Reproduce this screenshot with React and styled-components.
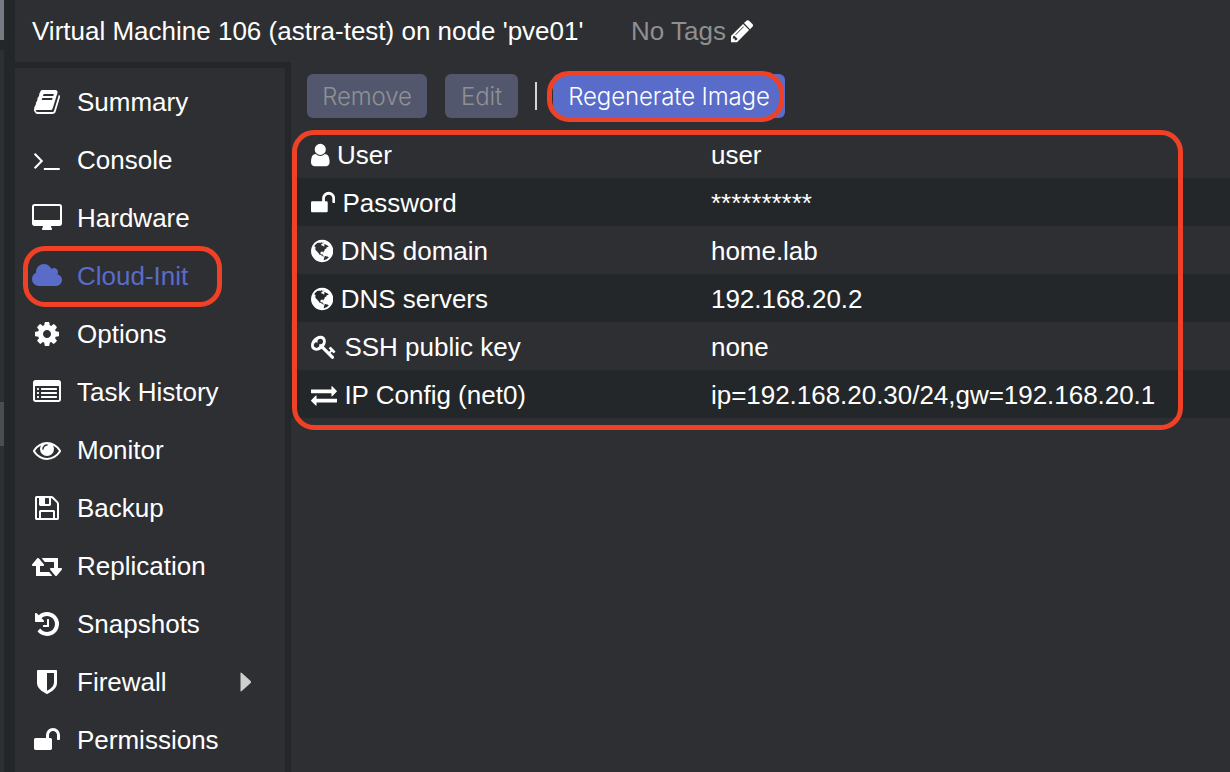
import React from 'react';
import styled, { createGlobalStyle } from 'styled-components';

const colors = {
  panel: '#2e2f33',
  dark: '#23272a',
  accent: '#596cc9',
  disabled: '#52576e',
  ring: '#ee4126',
};

const GlobalStyle = createGlobalStyle`
  * { box-sizing: border-box; }
  body {
    margin: 0;
    background: ${colors.dark};
    color: #fff;
    font-family: 'Liberation Sans', Arial, sans-serif;
    font-size: 26px;
    overflow: hidden;
  }
`;

/* Glyph outlines on a 1792-unit em: x is the left edge, w the advance width */
const glyphs = {
  book: { x: 64, w: 1664, d: 'M1703 478q40 57 18 129l-275 906q-19 64-76.5 107.500t-122.500 43.500h-923q-77 0-148.500-53.500t-99.500-131.500q-24-67-2-127 0-4 3-27t4-37q1-8-3-21.500t-3-19.500q2-11 8-21t16.500-23.500 16.500-23.500q23-38 45-91.500t30-91.500q3-10 .5-30t-.5-28q3-11 17-28t17-23q21-36 42-92t25-90q1-9-2.500-32t.5-28q4-13 22-30.500t22-22.500q19-26 42.500-84.500t27.500-96.500q1-8-3-25.500t-2-26.500q2-8 9-18t18-23 17-21q8-12 16.500-30.500t15-35 16-36 19.500-32 26.500-23.500 36-11.500 47.500 5.500l-1 3q38-9 51-9h761q74 0 114 56t18 130l-274 906q-36 119-71.500 153.500t-128.500 34.500h-869q-27 0-38 15-11 16-1 43 24 70 144 70h923q29 0 56-15.500t35-41.500l300-987q7-22 5-57 38 15 59 43zm-1064 2q-4 13 2 22.500t20 9.500h608q13 0 25.500-9.500t16.500-22.500l21-64q4-13-2-22.500t-20-9.500h-608q-13 0-25.500 9.500t-16.500 22.500zm-83 256q-4 13 2 22.500t20 9.500h608q13 0 25.500-9.500t16.500-22.500l21-64q4-13-2-22.500t-20-9.500h-608q-13 0-25.500 9.500t-16.500 22.500z' },
  terminal: { x: 77, w: 1651, d: 'M649 983l-466 466q-10 10-23 10t-23-10l-50-50q-10-10-10-23t10-23l393-393-393-393q-10-10-10-23t10-23l50-50q10-10 23-10t23 10l466 466q10 10 10 23t-10 23zm1079 457v64q0 14-9 23t-23 9h-960q-14 0-23-9t-9-23v-64q0-14 9-23t23-9h960q14 0 23 9t9 23z' },
  desktop: { x: 64, w: 1920, d: 'M1856 992v-832q0-13-9.500-22.500t-22.500-9.500h-1600q-13 0-22.500 9.500t-9.500 22.500v832q0 13 9.500 22.500t22.500 9.500h1600q13 0 22.500-9.500t9.500-22.500zm128-832v1088q0 66-47 113t-113 47h-544q0 37 16 77.500t32 71 16 43.500q0 26-19 45t-45 19h-512q-26 0-45-19t-19-45q0-14 16-44t32-70 16-78h-544q-66 0-113-47t-47-113v-1088q0-66 47-113t113-47h1600q66 0 113 47t47 113z' },
  cloud: { x: 64, w: 1920, d: 'M1984 1152q0 159-112.500 271.500t-271.500 112.500h-1088q-185 0-316.500-131.500t-131.500-316.500q0-132 71-241.500t187-163.500q-2-28-2-43 0-212 150-362t362-150q158 0 286.500 88t187.500 230q70-62 166-62 106 0 181 75t75 181q0 75-41 138 129 30 213 134.500t84 239.500z' },
  cog: { x: 128, w: 1536, d: 'M1152 896q0-106-75-181t-181-75-181 75-75 181 75 181 181 75 181-75 75-181zm512-109v222q0 12-8 23t-20 13l-185 28q-19 54-39 91 35 50 107 138 10 12 10 25t-9 23q-27 37-99 108t-94 71q-12 0-26-9l-138-108q-44 23-91 38-16 136-29 186-7 28-36 28h-222q-14 0-24.500-8.500t-11.500-21.500l-28-184q-49-16-90-37l-141 107q-10 9-25 9-14 0-25-11-126-114-165-168-7-10-7-23 0-12 8-23 15-21 51-66.500t54-70.500q-27-50-41-99l-183-27q-13-2-21-12.500t-8-23.500v-222q0-12 8-23t19-13l186-28q14-46 39-92-40-57-107-138-10-12-10-24 0-10 9-23 26-36 98.500-107.500t94.500-71.500q13 0 26 10l138 107q44-23 91-38 16-136 29-186 7-28 36-28h222q14 0 24.500 8.500t11.500 21.500l28 184q49 16 90 37l142-107q9-9 24-9 13 0 25 10 129 119 165 170 7 8 7 22 0 12-8 23-15 21-51 66.500t-54 70.500q26 50 41 98l183 28q13 2 21 12.500t8 23.500z' },
  listAlt: { x: 0, w: 1792, d: 'M384 1184v64q0 13-9.500 22.500t-22.500 9.500h-64q-13 0-22.500-9.500t-9.500-22.500v-64q0-13 9.500-22.500t22.500-9.500h64q13 0 22.500 9.500t9.500 22.500zm0-256v64q0 13-9.500 22.500t-22.500 9.500h-64q-13 0-22.500-9.500t-9.500-22.500v-64q0-13 9.500-22.500t22.500-9.500h64q13 0 22.500 9.500t9.500 22.500zm0-256v64q0 13-9.500 22.500t-22.500 9.500h-64q-13 0-22.500-9.500t-9.500-22.500v-64q0-13 9.500-22.500t22.500-9.500h64q13 0 22.500 9.500t9.500 22.500zm1152 512v64q0 13-9.500 22.500t-22.500 9.500h-960q-13 0-22.500-9.500t-9.500-22.500v-64q0-13 9.500-22.500t22.500-9.500h960q13 0 22.500 9.500t9.500 22.500zm0-256v64q0 13-9.500 22.500t-22.500 9.500h-960q-13 0-22.500-9.500t-9.500-22.500v-64q0-13 9.500-22.500t22.500-9.500h960q13 0 22.500 9.500t9.500 22.500zm0-256v64q0 13-9.500 22.500t-22.500 9.500h-960q-13 0-22.500-9.500t-9.500-22.500v-64q0-13 9.500-22.500t22.500-9.500h960q13 0 22.500 9.500t9.500 22.500zm128 704v-832q0-13-9.500-22.500t-22.500-9.500h-1472q-13 0-22.500 9.500t-9.500 22.500v832q0 13 9.500 22.500t22.500 9.500h1472q13 0 22.500-9.500t9.500-22.500zm128-1088v1088q0 66-47 113t-113 47h-1472q-66 0-113-47t-47-113v-1088q0-66 47-113t113-47h1472q66 0 113 47t47 113z' },
  eye: { x: 0, w: 1792, d: 'M1664 960q-152-236-381-353 61 104 61 225 0 185-131.500 316.500t-316.500 131.500-316.500-131.500-131.500-316.500q0-121 61-225-229 117-381 353 133 205 333.500 326.500t434.500 121.500 434.500-121.500 333.500-326.500zm-720-384q0-20-14-34t-34-14q-125 0-214.500 89.500t-89.500 214.500q0 20 14 34t34 14 34-14 14-34q0-86 61-147t147-61q20 0 34-14t14-34zm848 384q0 34-20 69-140 230-376.500 368.500t-499.500 138.500-499.500-139-376.500-368q-20-35-20-69t20-69q140-229 376.500-368t499.500-139 499.500 139 376.500 368q20 35 20 69z' },
  floppy: { x: 128, w: 1536, d: 'M512 1536h768v-384h-768v384zm896 0h128v-896q0-14-10-38.500t-20-34.500l-281-281q-10-10-34-20t-39-10v416q0 40-28 68t-68 28h-576q-40 0-68-28t-28-68v-416h-128v1280h128v-416q0-40 28-68t68-28h832q40 0 68 28t28 68v416zm-384-928v-320q0-13-9.500-22.500t-22.500-9.500h-192q-13 0-22.500 9.500t-9.500 22.500v320q0 13 9.500 22.500t22.500 9.500h192q13 0 22.500-9.500t9.500-22.500zm640 32v928q0 40-28 68t-68 28h-1344q-40 0-68-28t-28-68v-1344q0-40 28-68t68-28h928q40 0 88 20t76 48l280 280q28 28 48 76t20 88z' },
  retweet: { x: 0, w: 1920, flip: true, d: 'M1280 32q0-13-9.500-22.500t-22.500-9.500h-960q-8 0-13.500 2t-9 7t-5.500 8t-3 11.500t-1 11.500v13v11v160v416h-192q-26 0-45 19t-19 45q0 24 15 41l320 384q19 22 49 22t49-22l320-384q15-17 15-41q0-26-19-45t-45-19h-192v-384h576q16 0 25-11l160-192q7-10 7-21zM1920 448q0-24-15-41l-320-384q-20-23-49-23t-49 23l-320 384q-15 17-15 41q0 26 19 45t45 19h192v384h-576q-16 0-25 12l-160 192q-7 9-7 20q0 13 9.500 22.500t22.500 9.500h960q8 0 13.500-2t9-7t5.500-8t3-11.500t1-11.500v-13v-11v-160v-416h192q26 0 45-19t19-45z' },
  history: { x: 128, w: 1536, d: 'M1664 896q0 156-61 298t-164 245-245 164-298 61q-172 0-327-72.500t-264-204.500q-7-10-6.500-22.500t8.500-20.500l137-138q10-9 25-9 16 2 23 12 73 95 179 147t225 52q104 0 198.500-40.500t163.500-109.500 109.500-163.500 40.500-198.500-40.500-198.500-109.500-163.500-163.500-109.500-198.500-40.500q-98 0-188 35.500t-160 101.500l137 138q31 30 14 69-17 40-59 40h-448q-26 0-45-19t-19-45v-448q0-42 40-59 39-17 69 14l130 129q107-101 244.500-156.500t284.500-55.500q156 0 298 61t245 164 164 245 61 298zm-640-288v448q0 14-9 23t-23 9h-320q-14 0-23-9t-9-23v-64q0-14 9-23t23-9h224v-352q0-14 9-23t23-9h64q14 0 23 9t9 23z' },
  shield: { x: 256, w: 1280, d: 'M1344 960v-640h-448v1137q119-63 213-137 235-184 235-360zm192-768v768q0 86-33.500 170.500t-83 150-118 127.500-126.500 103-121 77.500-89.500 49.500-42.500 20q-12 6-26 6t-26-6q-16-7-42.500-20t-89.500-49.500-121-77.500-126.500-103-118-127.500-83-150-33.500-170.500v-768q0-26 19-45t45-19h1152q26 0 45 19t19 45z' },
  unlock: { x: 64, w: 1664, d: 'M1728 576v256q0 26-19 45t-45 19h-64q-26 0-45-19t-19-45v-256q0-106-75-181t-181-75-181 75-75 181v192h96q40 0 68 28t28 68v576q0 40-28 68t-68 28h-960q-40 0-68-28t-28-68v-576q0-40 28-68t68-28h672v-192q0-185 131.500-316.500t316.500-131.500 316.500 131.500 131.500 316.500z' },
  user: { x: 256, w: 1280, d: 'M1536 1399q0 109-62.500 187t-150.500 78h-854q-88 0-150.500-78t-62.500-187q0-85 8.500-160.500t31.500-152 58.500-131 94-89 134.500-34.500q131 128 313 128t313-128q76 0 134.500 34.500t94 89 58.500 131 31.500 152 8.500 160.500zm-256-887q0 159-112.500 271.500t-271.500 112.500-271.500-112.500-112.500-271.500 112.500-271.500 271.500-112.500 271.500 112.500 112.500 271.500z' },
  globe: { x: 128, w: 1536, d: 'M896 128q209 0 385.500 103t279.500 279.500 103 385.500-103 385.500-279.500 279.500-385.500 103-385.500-103-279.500-279.500-103-385.500 103-385.500 279.500-279.500 385.500-103zm274 521q-2 1-9.500 9.500t-13.500 9.500q2 0 4.500-5t5-11 3.500-7q6-7 22-15 14-6 52-12 34-8 51 11-2-2 9.500-13t14.500-12q3-2 15-4.500t15-7.500l2-22q-12 1-17.500-7t-6.500-21q0 2-6 8 0-7-4.500-8t-11.500 1-9 1q-10-3-15-7.500t-8-16.500-4-15q-2-5-9.500-11t-9.500-10q-1-2-2.500-5.500t-3-6.500-4-5.500-5.500-2.500-7 5-7.500 10-4.500 5q-3-2-6-1.500t-4.500 1-4.500 3-5 3.500q-3 2-8.500 3t-8.500 2q15-5-1-11-10-4-16-3 9-4 7.500-12t-8.500-14h5q-1-4-8.500-8.500t-17.500-8.500-13-6q-8-5-34-9.500t-33-.5q-5 6-4.500 10.500t4 14 3.500 12.500q1 6-5.500 13t-6.500 12q0 7 14 15.500t10 21.500q-3 8-16 16t-16 12q-5 8-1.500 18.500t10.500 16.500q2 2 1.500 4t-3.500 4.500-5.500 4-6.500 3.500l-3 2q-11 5-20.500-6t-13.500-26q-7-25-16-30-23-8-29 1-5-13-41-26-25-9-58-4 6-1 0-15-7-15-19-12 3-6 4-17.500t1-13.500q3-13 12-23 1-1 7-8.500t9.500-13.500.5-6q35 4 50-11 5-5 11.500-17t10.500-17q9-6 14-5.500t14.500 5.500 14.500 5q14 1 15.500-11t-7.500-20q12 1 3-17-5-7-8-9-12-4-27 5-8 4 2 8-1-1-9.500 10.500t-16.500 17.500-16-5q-1-1-5.500-13.500t-9.500-13.500q-8 0-16 15 3-8-11-15t-24-8q19-12-8-27-7-4-20.500-5t-19.500 4q-5 7-5.500 11.500t5 8 10.500 5.500 11.500 4 8.500 3q14 10 8 14-2 1-8.500 3.500t-11.500 4.500-6 4q-3 4 0 14t-2 14q-5-5-9-17.500t-7-16.500q7 9-25 6l-10-1q-4 0-16 2t-20.500 1-13.500-8q-4-8 0-20 1-4 4-2-4-3-11-9.500t-10-8.500q-46 15-94 41 6 1 12-1 5-2 13-6.500t10-5.500q34-14 42-7l5-5q14 16 20 25-7-4-30-1-20 6-22 12 7 12 5 18-4-3-11.500-10t-14.500-11-15-5q-16 0-22 1-146 80-235 222 7 7 12 8 4 1 5 9t2.500 11 11.500-3q9 8 3 19 1-1 44 27 19 17 21 21 3 11-10 18-1-2-9-9t-9-4q-3 5 .5 18.500t10.500 12.500q-7 0-9.500 16t-2.500 35.500-1 23.500l2 1q-3 12 5.500 34.500t21.500 19.500q-13 3 20 43 6 8 8 9 3 2 12 7.500t15 10 10 10.500q4 5 10 22.500t14 23.500q-2 6 9.500 20t10.500 23q-1 0-2.500 1t-2.500 1q3 7 15.500 14t15.500 13q1 3 2 10t3 11 8 2q2-20-24-62-15-25-17-29-3-5-5.500-15.500t-4.500-14.500q2 0 6 1.500t8.500 3.500 7.500 4 2 3q-3 7 2 17.500t12 18.500 17 19 12 13q6 6 14 19.500t0 13.500q9 0 20 10.500t17 19.500q5 8 8 26t5 24q2 7 8.500 13.500t12.500 9.500l16 8 13 7q5 2 18.500 10.500t21.500 11.500q10 4 16 4t14.500-2.500 13.500-3.500q15-2 29 15t21 21q36 19 55 11-2 1 .5 7.500t8 15.500 9 14.500 5.500 8.500q5 6 18 15t18 15q6-4 7-9-3 8 7 20t18 10q14-3 14-32-31 15-49-18 0-1-2.500-5.500t-4-8.500-2.500-8.500 0-7.500 5-3q9 0 10-3.500t-2-12.500-4-13q-1-8-11-20t-12-15q-5 9-16 8t-16-9q0 1-1.500 5.500t-1.500 6.500q-13 0-15-1 1-3 2.500-17.500t3.500-22.500q1-4 5.500-12t7.500-14.500 4-12.500-4.500-9.500-17.500-2.500q-19 1-26 20-1 3-3 10.500t-5 11.500-9 7q-7 3-24 2t-24-5q-13-8-22.500-29t-9.500-37q0-10 2.500-26.500t3-25-5.500-24.500q3-2 9-9.500t10-10.500q2-1 4.500-1.500t4.500 0 4-1.500 3-6q-1-1-4-3-3-3-4-3 7 3 28.500-1.500t27.500 1.500q15 11 22-2 0-1-2.500-9.500t-.5-13.500q5 27 29 9 3 3 15.500 5t17.500 5q3 2 7 5.500t5.500 4.500 5-.5 8.500-6.500q10 14 12 24 11 40 19 44 7 3 11 2t4.500-9.500 0-14-1.500-12.500l-1-8v-18l-1-8q-15-3-18.500-12t1.500-18.500 15-18.500q1-1 8-3.500t15.500-6.500 12.500-8q21-19 15-35 7 0 11-9-1 0-5-3t-7.500-5-4.500-2q9-5 2-16 5-3 7.500-11t7.500-10q9 12 21 2 7-8 1-16 5-7 20.500-10.500t18.500-9.500q7 2 8-2t1-12 3-12q4-5 15-9t13-5l17-11q3-4 0-4 18 2 31-11 10-11-6-20 3-6-3-9.500t-15-5.500q3-1 11.500-.5t10.500-1.500q15-10-7-16-17-5-43 12zm-163 877q206-36 351-189-3-3-12.500-4.500t-12.500-3.500q-18-7-24-8 1-7-2.500-13t-8-9-12.500-8-11-7q-2-2-7-6t-7-5.500-7.500-4.500-8.500-2-10 1l-3 1q-3 1-5.500 2.500t-5.500 3-4 3 0 2.500q-21-17-36-22-5-1-11-5.500t-10.500-7-10-1.500-11.500 7q-5 5-6 15t-2 13q-7-5 0-17.500t2-18.500q-3-6-10.500-4.500t-12 4.500-11.500 8.500-9 6.500-8.500 5.500-8.500 7.500q-3 4-6 12t-5 11q-2-4-11.500-6.500t-9.500-5.500q2 10 4 35t5 38q7 31-12 48-27 25-29 40-4 22 12 26 0 7-8 20.500t-7 21.500q0 6 2 16z' },
  key: { x: 0, w: 1792, d: 'M832 512q0-80-56-136t-136-56-136 56-56 136q0 42 19 83-41-19-83-19-80 0-136 56t-56 136 56 136 136 56 136-56 56-136q0-42-19-83 41 19 83 19 80 0 136-56t56-136zm851 704q0 17-49 66t-66 49q-9 0-28.500-16t-36.500-33-38.500-40-24.500-26l-96 96 220 220q28 28 28 68 0 42-39 81t-81 39q-40 0-68-28l-671-671q-176 131-365 131-163 0-265.500-102.500t-102.500-265.500q0-160 95-313t248-248 313-95q163 0 265.500 102.500t102.500 265.500q0 189-131 365l355 355 96-96q-3-3-26-24.500t-40-38.500-33-36.500-16-28.500q0-17 49-66t66-49q13 0 23 10 6 6 46 44.500t82 79.500 86.500 86 73 78 28.500 41z' },
  exchange: { x: 0, w: 1792, d: 'M1792 1184v192q0 13-9.500 22.500t-22.500 9.500h-1376v192q0 13-9.500 22.500t-22.500 9.500q-12 0-24-10l-319-320q-9-9-9-22 0-14 9-23l320-320q9-9 23-9 13 0 22.500 9.500t9.500 22.500v192h1376q13 0 22.500 9.500t9.500 22.500zm0-544q0 14-9 23l-320 320q-9 9-23 9-13 0-22.500-9.500t-9.500-22.500v-192h-1376q-13 0-22.500-9.500t-9.500-22.500v-192q0-13 9.500-22.500t22.500-9.500h1376v-192q0-14 9-23t23-9q12 0 24 10l319 319q9 9 9 23z' },
  pencil: { x: 128, w: 1536, d: 'M491 1536l91-91-235-235-91 91v107h128v128h107zm523-928q0-22-22-22-10 0-17 7l-542 542q-7 7-7 17 0 22 22 22 10 0 17-7l542-542q7-7 7-17zm-54-192l416 416-832 832h-416v-416zm683 96q0 53-37 90l-166 166-416-416 166-165q36-38 90-38 53 0 91 38l235 234q37 39 37 91z' },
};

const Svg = styled.svg`
  display: block;
  flex: none;
  fill: currentColor;
`;

function Glyph({ name, size }) {
  const g = glyphs[name];
  return (
    <Svg width={(g.w / 1792) * size} height={size} viewBox={`${g.x} 0 ${g.w} 1792`}>
      <path d={g.d} transform={g.flip ? 'translate(0 1536) scale(1 -1)' : undefined} />
    </Svg>
  );
}

const Screen = styled.div`
  position: relative;
  display: flex;
  width: 1230px;
  height: 772px;
  background: ${colors.dark};
`;

const TreeEdge = styled.div`
  display: flex;
  flex-direction: column;
  flex: none;
  width: 4px;
  margin-right: 11px;
`;

const TreeEdgePart = styled.div`
  height: ${(p) => p.$height}px;
  background: ${(p) => p.$color};
`;

const Main = styled.div`
  display: flex;
  flex-direction: column;
  flex: 1;
  min-width: 0;
`;

const TitleBar = styled.header`
  display: flex;
  align-items: center;
  flex: none;
  height: 62px;
  padding-left: 17px;
  background: ${colors.panel};
  white-space: nowrap;
`;

const Title = styled.h1`
  width: 599px;
  margin: 0;
  font-size: 26px;
  font-weight: 400;
`;

const Tags = styled.div`
  display: flex;
  align-items: center;
  gap: 5px;
  color: #8e8f91;
  svg { color: #fff; }
`;

const Body = styled.div`
  display: flex;
  flex: 1;
  min-height: 0;
`;

const Sidebar = styled.nav`
  flex: none;
  width: 276px;
  padding-top: 5px;
  border-top: 6px solid ${colors.dark};
  border-right: 6px solid ${colors.dark};
  background: ${colors.panel};
`;

const MenuItem = styled.div`
  display: flex;
  align-items: center;
  height: 58px;
  padding-left: 14px;
  color: ${(p) => (p.$active ? colors.accent : '#fff')};
`;

const MenuIcon = styled.span`
  display: flex;
  justify-content: center;
  width: 36px;
  margin-right: 12px;
`;

const MenuLabel = styled.span`
  flex: 1;
`;

const Expander = styled.svg`
  display: block;
  margin-right: 33px;
  fill: #cfcfcf;
`;

const Content = styled.main`
  flex: 1;
  min-width: 0;
  background: ${colors.panel};
`;

const Toolbar = styled.div`
  display: flex;
  align-items: center;
  height: 68px;
  padding-left: 16px;
`;

const Button = styled.button`
  width: ${(p) => p.$width}px;
  height: 44px;
  padding: 0;
  border: 0;
  border-radius: 6px;
  background: ${colors.accent};
  color: #fff;
  font: 300 24px Inter, 'Liberation Sans', sans-serif;
  letter-spacing: -0.12px;
  white-space: nowrap;
  & + & { margin-left: 18px; }
  &:disabled {
    background: ${colors.disabled};
    color: #909193;
  }
`;

const Separator = styled.span`
  width: 2px;
  height: 28px;
  margin: 0 16px 0 17px;
  background: #d5d5d6;
`;

const Row = styled.div`
  display: flex;
  align-items: center;
  height: 48px;
  padding-left: 20px;
  background: ${colors.panel};
  &:nth-child(even) { background: ${colors.dark}; }
`;

const Key = styled.div`
  display: flex;
  align-items: center;
  gap: 7.4px;
  width: 400px;
  padding-top: 2px;
`;

const Value = styled.div`
  padding-top: 2px;
  white-space: nowrap;
  letter-spacing: -0.03px;
`;

const Ring = styled.div`
  position: absolute;
  left: ${(p) => p.$x}px;
  top: ${(p) => p.$y}px;
  width: ${(p) => p.$w}px;
  height: ${(p) => p.$h}px;
  border: 5px solid ${colors.ring};
  border-radius: 22px;
  pointer-events: none;
`;

const menu = [
  ['book', 'Summary'],
  ['terminal', 'Console'],
  ['desktop', 'Hardware'],
  ['cloud', 'Cloud-Init'],
  ['cog', 'Options'],
  ['listAlt', 'Task History'],
  ['eye', 'Monitor'],
  ['floppy', 'Backup'],
  ['retweet', 'Replication'],
  ['history', 'Snapshots'],
  ['shield', 'Firewall'],
  ['unlock', 'Permissions'],
];

const settings = [
  ['user', 'User', 'user'],
  ['unlock', 'Password', '**********'],
  ['globe', 'DNS domain', 'home.lab'],
  ['globe', 'DNS servers', '192.168.20.2'],
  ['key', 'SSH public key', 'none'],
  ['exchange', 'IP Config (net0)', 'ip=192.168.20.30/24,gw=192.168.20.1'],
];

export default function App() {
  return (
    <Screen>
      <GlobalStyle />
      <TreeEdge>
        <TreeEdgePart $height={40} $color="#777a82" />
        <TreeEdgePart $height={10} $color={colors.dark} />
        <TreeEdgePart $height={352} $color={colors.panel} />
        <TreeEdgePart $height={44} $color="#4c4d51" />
        <TreeEdgePart $height={326} $color={colors.panel} />
      </TreeEdge>
      <Main>
        <TitleBar>
          <Title>Virtual Machine 106 (astra-test) on node 'pve01'</Title>
          <Tags>
            No Tags
            <Glyph name="pencil" size={26} />
          </Tags>
        </TitleBar>
        <Body>
          <Sidebar>
            {menu.map(([icon, label]) => (
              <MenuItem key={label} $active={label === 'Cloud-Init'}>
                <MenuIcon><Glyph name={icon} size={28} /></MenuIcon>
                <MenuLabel>{label}</MenuLabel>
                {label === 'Firewall' && (
                  <Expander width="12" height="20" viewBox="0 0 12 20">
                    <path d="M.5 1.500Q.5 0 1.800 1L10.700 9Q11.500 10 10.700 11L1.800 19Q.5 20 .5 18.500z" />
                  </Expander>
                )}
              </MenuItem>
            ))}
          </Sidebar>
          <Content>
            <Toolbar>
              <Button disabled $width={120}>Remove</Button>
              <Button disabled $width={73}>Edit</Button>
              <Separator />
              <Button $width={232}>Regenerate Image</Button>
            </Toolbar>
            <div>
              {settings.map(([icon, name, value]) => (
                <Row key={name}>
                  <Key><Glyph name={icon} size={26} />{name}</Key>
                  <Value>{value}</Value>
                </Row>
              ))}
            </div>
          </Content>
        </Body>
      </Main>
      <Ring $x={23} $y={246} $w={199} $h={61} />
      <Ring $x={547} $y={71} $w={237} $h={51} />
      <Ring $x={292} $y={130} $w={891} $h={300} />
    </Screen>
  );
}
